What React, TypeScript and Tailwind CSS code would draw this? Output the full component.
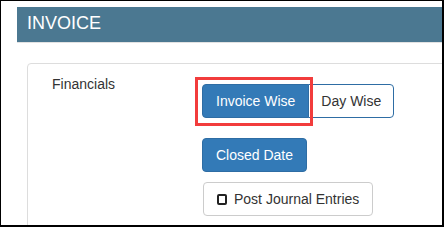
import { useState } from 'react'

type Mode = 'invoice' | 'day'

export default function App() {
  const [mode, setMode] = useState<Mode>('invoice')
  const [postJournal, setPostJournal] = useState(false)

  return (
    <div
      className="w-[444px] h-[227px] overflow-hidden bg-white border-black border-l border-t border-r-2 border-b-2 pt-[6px] pl-4 text-[#333]"
      style={{ fontFamily: '"Liberation Sans", Arial, sans-serif' }}
    >
      {/* Header */}
      <div className="w-[440px] h-[36px] bg-[#4b7891] border-b border-[#e2e2e2] flex items-center pl-[10px] pb-[2px]">
        <h1 className="text-[18px] leading-[21px] text-white">INVOICE</h1>
      </div>

      {/* Panel */}
      <div className="mt-[20px] ml-[10px] w-[440px] h-[200px] border border-[#dddddd] rounded-[4px] pt-[10px] pl-[24px] flex">
        <div className="w-[150px] shrink-0 text-[14px] leading-[20px]">Financials</div>

        <div className="mt-[10px] flex flex-col items-start">
          {/* Invoice / day toggle */}
          <div className="relative flex">
            <button
              onClick={() => setMode('invoice')}
              className={`h-[34px] px-[13px] text-[14px] leading-[20px] border rounded-l-[4px] ${
                mode === 'invoice'
                  ? 'bg-[#337ab7] border-[#2e6da4] text-white'
                  : 'bg-white border-[#2e6da4] text-[#333]'
              }`}
            >
              Invoice Wise
            </button>
            <button
              onClick={() => setMode('day')}
              className={`h-[34px] px-[12px] text-[14px] leading-[20px] border rounded-r-[4px] -ml-px ${
                mode === 'day'
                  ? 'bg-[#337ab7] border-[#2e6da4] text-white'
                  : 'bg-white border-[#2e6da4] text-[#333]'
              }`}
            >
              Day Wise
            </button>
            {/* Highlight annotation */}
            <div className="pointer-events-none absolute left-[-7px] top-[-7px] w-[118px] h-[49px] border-[3px] border-[#f23c3c]" />
          </div>

          <button className="mt-[20px] h-[34px] px-[13px] text-[14px] leading-[20px] text-white bg-[#337ab7] border border-[#2e6da4] rounded-[4px]">
            Closed Date
          </button>

          <button
            onClick={() => setPostJournal(!postJournal)}
            className="mt-[10px] ml-px h-[34px] px-[13px] flex items-center text-[14px] leading-[20px] bg-white border border-[#cccccc] rounded-[4px]"
          >
            <span
              className={`shrink-0 w-[10px] h-[11px] border-2 border-[#222] rounded-[2px] mr-[7px] ${
                postJournal ? 'bg-[#222]' : ''
              }`}
            />
            Post Journal Entries
          </button>
        </div>
      </div>
    </div>
  )
}
